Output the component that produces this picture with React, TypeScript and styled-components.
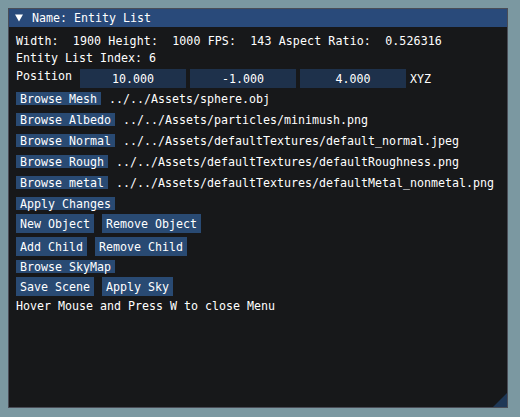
import styled, { createGlobalStyle } from "styled-components";

const GlobalStyle = createGlobalStyle`
  body {
    margin: 0;
    background: #7b98a1;
  }
`;

const Page = styled.div`
  padding: 8px;
`;

const Window = styled.div`
  position: relative;
  width: 500px;
  height: 400px;
  box-sizing: border-box;
  border: 1px solid #4a4d57;
  background: #17181a;
  color: #ffffff;
  font-family: "DejaVu Sans Mono", "Liberation Mono", monospace;
  font-size: 11.63px;
  line-height: 13px;
  white-space: pre;
`;

const TitleBar = styled.div`
  height: 18px;
  background: #294a7a;
  display: flex;
  align-items: center;
  gap: 9px;
  padding-left: 6px;
`;

const Arrow = styled.svg`
  width: 8px;
  height: 8px;
  flex: none;
`;

const Body = styled.div`
  display: flex;
  flex-direction: column;
  gap: 4px;
  padding: 8px 7px;
`;

const Text = styled.div<{ $track?: number }>`
  height: 13px;
  letter-spacing: ${(p) => p.$track ?? 0}px;
`;

const Row = styled.div<{ $gap?: number }>`
  display: flex;
  align-items: flex-start;
  gap: ${(p) => p.$gap ?? 8}px;
`;

const BrowseList = styled.div`
  display: flex;
  flex-direction: column;
  gap: 8px;
`;

const Label = styled.span<{ $framed?: boolean }>`
  padding-top: ${(p) => (p.$framed ? 4 : 1)}px;
`;

const Field = styled.div`
  width: 106px;
  height: 19px;
  box-sizing: border-box;
  padding-top: 4px;
  background: #1e314b;
  text-align: center;
`;

const Button = styled.div<{ $small?: boolean }>`
  background: #294a73;
  box-sizing: border-box;
  height: ${(p) => (p.$small ? 13 : 19)}px;
  padding: ${(p) => (p.$small ? "1px 4px 0" : "4px 4px 0")};
  line-height: 12px;
`;

const Path = styled.span`
  padding-top: 1px;
  line-height: 12px;
`;

const Grip = styled.div`
  position: absolute;
  right: 0;
  bottom: 0;
  width: 14px;
  height: 14px;
  background: #1f3857;
  clip-path: polygon(100% 0, 100% 100%, 0 100%);
`;

const browse = [
  ["Browse Mesh", "../../Assets/sphere.obj"],
  ["Browse Albedo", "../../Assets/particles/minimush.png"],
  ["Browse Normal", "../../Assets/defaultTextures/default_normal.jpeg"],
  ["Browse Rough", "../../Assets/defaultTextures/defaultRoughness.png"],
  ["Browse metal", "../../Assets/defaultTextures/defaultMetal_nonmetal.png"],
];

export default function App() {
  return (
    <>
      <GlobalStyle />
      <Page>
        <Window>
          <TitleBar>
            <Arrow viewBox="0 0 8 8">
              <polygon points="0,0.5 8,0.5 4,7.5" fill="#ffffff" />
            </Arrow>
            <span>Name: Entity List</span>
          </TitleBar>
          <Body>
            <Text $track={0.1}>
              Width:  1900 Height:  1000 FPS:  143 Aspect Ratio:  0.526316
            </Text>
            <Text>Entity List Index: 6</Text>
            <Row>
              <Label>Position</Label>
              <Row $gap={4}>
                <Field>10.000</Field>
                <Field>-1.000</Field>
                <Field>4.000</Field>
                <Label $framed>XYZ</Label>
              </Row>
            </Row>
            <BrowseList>
              {browse.map(([name, path]) => (
                <Row key={name}>
                  <Button $small>{name}</Button>
                  <Path>{path}</Path>
                </Row>
              ))}
              <Row>
                <Button $small>Apply Changes</Button>
              </Row>
            </BrowseList>
            <Row>
              <Button>New Object</Button>
              <Button>Remove Object</Button>
            </Row>
            <Row>
              <Button>Add Child</Button>
              <Button>Remove Child</Button>
            </Row>
            <Row>
              <Button $small>Browse SkyMap</Button>
            </Row>
            <Row>
              <Button>Save Scene</Button>
              <Button>Apply Sky</Button>
            </Row>
            <Text>Hover Mouse and Press W to close Menu</Text>
          </Body>
          <Grip />
        </Window>
      </Page>
    </>
  );
}
